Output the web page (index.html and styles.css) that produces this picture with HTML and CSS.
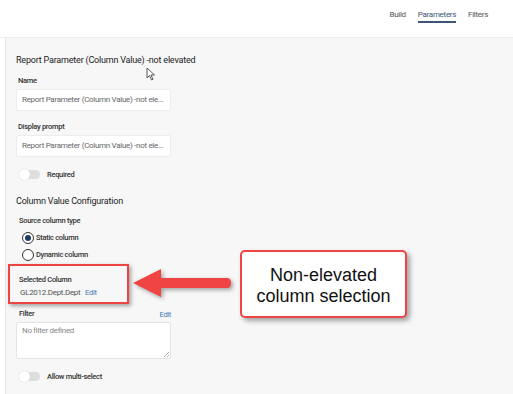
FILE: index.html
```html
<!DOCTYPE html>
<html>
<head>
    <link rel="stylesheet" href="styles.css">
</head>
<body>
    <div class="topbar">
        <div class="tabs">
            <div class="tab">Build</div>
            <div class="tab active">Parameters</div>
            <div class="tab">Filters</div>
        </div>
    </div>

    <div class="page">
        <div class="panel">
            <div class="title">Report Parameter (Column Value) -not elevated</div>

            <div class="label">Name</div>
            <div class="input">Report Parameter (Column Value) -not ele...</div>

            <div class="label">Display prompt</div>
            <div class="input">Report Parameter (Column Value) -not ele...</div>

            <div class="toggle-row">
                <span class="toggle"></span>
                <span class="toggle-label">Required</span>
            </div>

            <div class="section">Column Value Configuration</div>
            <div class="label">Source column type</div>
            <div class="radio-row"><span class="radio checked"></span>Static column</div>
            <div class="radio-row"><span class="radio"></span>Dynamic column</div>

            <div class="selected">
                <div class="label">Selected Column</div>
                <div class="value">GL2012.Dept.Dept <span class="link">Edit</span></div>
            </div>

            <div class="filter-head">
                <div class="label">Filter</div>
                <span class="link">Edit</span>
            </div>
            <div class="textarea">No filter defined
                <svg class="grip" width="6" height="6" viewBox="0 0 6 6"><path d="M6 1L1 6M6 4L4 6" stroke="#999" stroke-width="0.8"/></svg>
            </div>

            <div class="toggle-row">
                <span class="toggle"></span>
                <span class="toggle-label">Allow multi-select</span>
            </div>
        </div>

        <!-- annotations -->
        <svg class="cursor" width="10" height="14" viewBox="0 0 10 14"><path d="M1 1L1 11L3.5 8.5L5.5 13L7 12.3L5 8L8.5 8Z" fill="#fff" stroke="#444" stroke-width="0.9" stroke-linejoin="round"/></svg>
        <div class="highlight"></div>
        <svg class="arrow" width="104" height="36" viewBox="0 0 104 36"><path d="M2 16L30 2L30 11L96 11Q100 11 100 16Q100 21 96 21L30 21L30 30Z" fill="#f04343"/></svg>
        <div class="callout">Non-elevated<br>column selection</div>
    </div>
</body>
</html>
```
FILE: styles.css
```css
body {
    margin: 0;
    font-family: Roboto, "Noto Sans", sans-serif;
    background-color: #fff;
    color: #222;
    width: 513px;
    height: 394px;
    overflow: hidden;
}
.topbar {
    height: 37px;
    border-bottom: 1px solid #ececec;
    display: flex;
    justify-content: flex-end;
    background-color: #fff;
}
.tabs {
    display: flex;
    gap: 12px;
    margin-right: 25px;
}
.tab {
    font-size: 8px;
    letter-spacing: -0.3px;
    color: #555;
    padding-top: 10px;
    height: 11px;
    border-bottom: 2px solid transparent;
}
.tab.active {
    color: #3b5577;
    border-bottom-color: #3b5577;
}
.page {
    position: relative;
    height: 356px;
    padding-left: 5px;
}
.panel {
    height: 100%;
    background-color: #f7f7f7;
    border-left: 1px solid #e6e6e6;
    padding: 15px 0 0 10px;
    letter-spacing: -0.3px;
}
.title {
    font-size: 9px;
    letter-spacing: -0.2px;
    line-height: 14px;
    color: #222;
    margin-bottom: 8px;
}
.label {
    font-size: 7.5px;
    font-weight: 500;
    line-height: 12px;
    color: #333;
    padding-left: 2px;
}
.input {
    width: 148px;
    height: 20px;
    line-height: 20px;
    background-color: #fff;
    border: 1px solid #ededed;
    border-radius: 2px;
    font-size: 8px;
    color: #666;
    padding-left: 5px;
    margin-top: 2px;
    margin-bottom: 10px;
    white-space: nowrap;
    overflow: hidden;
}
.toggle-row {
    display: flex;
    align-items: center;
    gap: 7px;
    padding-left: 3px;
    margin-top: 13px;
}
.toggle {
    position: relative;
    width: 21px;
    height: 9px;
    border-radius: 5px;
    background-color: #dedede;
}
.toggle::before {
    content: "";
    position: absolute;
    left: 0;
    top: -1px;
    width: 11px;
    height: 11px;
    border-radius: 50%;
    background-color: #fff;
    box-shadow: 0 0 1px #bbb;
}
.toggle-label {
    font-size: 7.5px;
    font-weight: 500;
    color: #333;
}
.section {
    font-size: 9px;
    letter-spacing: -0.2px;
    line-height: 14px;
    margin-top: 15px;
    margin-bottom: 7px;
}
.section + .label {
    padding-left: 3px;
    margin-bottom: 2px;
}
.radio-row {
    display: flex;
    align-items: center;
    gap: 2px;
    font-size: 7.5px;
    font-weight: 500;
    color: #333;
    height: 17px;
    padding-left: 6px;
}
.radio {
    width: 10px;
    height: 10px;
    border: 1px solid #333;
    border-radius: 50%;
    background-color: #fff;
    position: relative;
}
.radio.checked::before {
    content: "";
    position: absolute;
    left: 2px;
    top: 2px;
    width: 6px;
    height: 6px;
    border-radius: 50%;
    background-color: #1d3a66;
}
.selected {
    margin-top: 11px;
    padding-left: 1px;
}
.value {
    font-size: 8px;
    color: #555;
    line-height: 14px;
    padding-left: 3px;
}
.link {
    color: #3f78b5;
    font-size: 7.5px;
    margin-left: 3px;
}
.filter-head {
    display: flex;
    justify-content: space-between;
    align-items: center;
    width: 154px;
    margin-top: 8px;
    padding-left: 1px;
}
.textarea {
    position: relative;
    width: 148px;
    height: 32px;
    background-color: #fff;
    border: 1px solid #e3e3e3;
    border-radius: 2px;
    font-size: 8px;
    color: #888;
    padding: 3px 0 0 5px;
    margin-top: 2px;
}
.grip {
    position: absolute;
    right: 1px;
    bottom: 1px;
}
.textarea + .toggle-row {
    margin-top: 13px;
}
.cursor {
    position: absolute;
    left: 146px;
    top: 29px;
}
.highlight {
    position: absolute;
    left: 8px;
    top: 226px;
    width: 117px;
    height: 36px;
    border: 2px solid #f04343;
    box-shadow: 2px 2px 4px rgba(0, 0, 0, 0.35);
}
.arrow {
    position: absolute;
    left: 131px;
    top: 229px;
    filter: drop-shadow(2px 2px 2px rgba(0, 0, 0, 0.35));
}
.callout {
    position: absolute;
    left: 240px;
    top: 212px;
    width: 163px;
    height: 60px;
    padding-top: 4px;
    border: 2px solid #f04343;
    border-radius: 5px;
    background-color: #fff;
    box-shadow: 3px 3px 5px rgba(0, 0, 0, 0.35);
    font-family: "Liberation Sans", Arial, sans-serif;
    font-size: 18px;
    line-height: 21px;
    color: #111;
    text-align: center;
    display: flex;
    align-items: center;
    justify-content: center;
}
```
